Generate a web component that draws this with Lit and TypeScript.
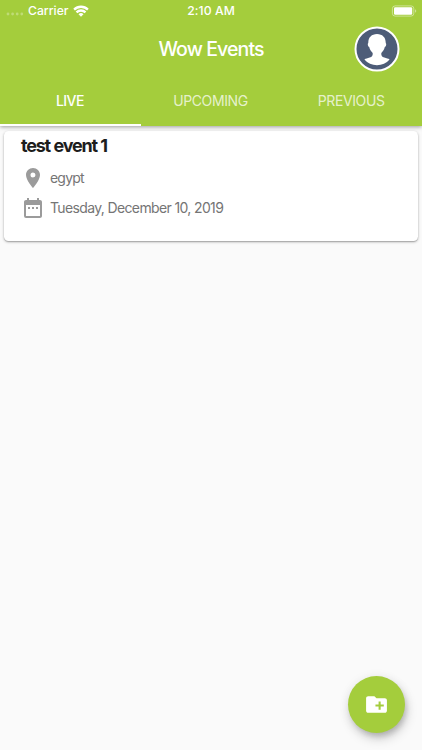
import { LitElement, html, css } from "lit";
import { customElement, property, state } from "lit/decorators.js";
import { classMap } from "lit/directives/class-map.js";

@customElement("status-bar")
class StatusBar extends LitElement {
  static styles = css`
    :host { display: grid; grid-template-columns: 1fr auto 1fr; align-items: center; height: 20px; padding: 0 5px 0 6px; color: #fff; font-size: 12.2px; line-height: 20px; font-weight: 500; }
    .left { display: flex; align-items: center; }
    .dots { width: 18px; height: 4px; margin: 7px 4px 0 0; }
    .carrier { letter-spacing: 0; font-weight: 450; padding-top: 1px; }
    .wifi { width: 16px; height: 12px; margin: 0 0 0 4px; }
    .time { letter-spacing: 0.08px; padding: 1px 1px 0 0; }
    .right { display: flex; justify-content: flex-end; }
    .battery { width: 26px; height: 12px; }
  `;
  render() {
    return html`
      <div class="left">
        <svg class="dots" viewBox="0 0 18 4" fill="#fff" fill-opacity=".3">
          <circle cx="2" cy="2" r="1.4"/><circle cx="6.6" cy="2" r="1.4"/><circle cx="11.2" cy="2" r="1.4"/><circle cx="15.8" cy="2" r="1.4"/>
        </svg>
        <span class="carrier">Carrier</span>
        <svg class="wifi" viewBox="0 0 16 12" fill="none" stroke="#fff" stroke-width="2.3">
          <path d="M1.1 4.6a9.8 9.8 0 0 1 13.8 0M3.5 7.4a6.3 6.3 0 0 1 9 0"/>
          <path d="M8 11.8 5.5 9.3a3.5 3.5 0 0 1 5 0z" fill="#fff" stroke="none"/>
        </svg>
      </div>
      <span class="time">2:10 AM</span>
      <div class="right">
        <svg class="battery" viewBox="0 0 26 12">
          <rect x="1.4" y=".9" width="21.4" height="10.2" rx="2.7" fill="none" stroke="#fff" stroke-opacity=".45"/>
          <rect x="3" y="2.3" width="18.2" height="7.4" rx="1.2" fill="#fff"/>
          <path d="M24.1 4.3c1.5.5 1.5 2.9 0 3.4z" fill="#fff" fill-opacity=".5"/>
        </svg>
      </div>`;
  }
}

@customElement("event-card")
class EventCard extends LitElement {
  @property() name = "";
  @property() place = "";
  @property() date = "";
  static styles = css`
    :host { display: block; box-sizing: border-box; height: 110px; padding: 3px 17px; background: #fff; border-radius: 4.5px; box-shadow: 0 1px 3px rgba(0,0,0,.28), 0 1px 1px rgba(0,0,0,.16); }
    .name { margin: 0; font-size: 18px; line-height: 24px; font-weight: 700; letter-spacing: -1.2px; word-spacing: 0.4px; color: #1d1d1d; }
    .row { display: flex; align-items: center; height: 30px; gap: 5px; font-size: 14px; line-height: 20px; color: #757575; letter-spacing: -0.64px; }
    .rows { padding-top: 5px; }
    .place { letter-spacing: -0.8px; }
    .icon { width: 24px; height: 24px; fill: #9b9b9b; }
  `;
  render() {
    return html`
      <h2 class="name">${this.name}</h2>
      <div class="rows">
        <div class="row">
          <svg class="icon" viewBox="0 0 24 24"><path d="M12 2C8.13 2 5 5.13 5 9c0 5.25 7 13 7 13s7-7.75 7-13c0-3.87-3.13-7-7-7zm0 9.5a2.5 2.5 0 1 1 0-5 2.5 2.5 0 0 1 0 5z"/></svg>
          <span class="place">${this.place}</span>
        </div>
        <div class="row">
          <svg class="icon" viewBox="0 0 24 24"><path d="M9 11H7v2h2v-2zm4 0h-2v2h2v-2zm4 0h-2v2h2v-2zm2-7h-1V2h-2v2H8V2H6v2H5c-1.11 0-1.99.9-1.99 2L3 20a2 2 0 0 0 2 2h14c1.1 0 2-.9 2-2V6c0-1.1-.9-2-2-2zm0 16H5V9h14v11z"/></svg>
          <span class="date">${this.date}</span>
        </div>
      </div>`;
  }
}

@customElement("app-root")
class AppRoot extends LitElement {
  @state() private active = 0;
  private tabs = ["LIVE", "UPCOMING", "PREVIOUS"];
  static styles = css`
    :host { display: flex; flex-direction: column; position: relative; height: 750px; overflow: hidden; background: #fafafa; font-family: Inter, "Liberation Sans", sans-serif; }
    .header { position: relative; z-index: 1; height: 126px; background: #a4cd3c; box-shadow: 0 1px 4px rgba(0,0,0,.38); }
    .bar { display: grid; grid-template-columns: 1fr auto 1fr; align-items: center; height: 58px; padding-right: 22px; padding-left: 22px; }
    .title { grid-column: 2; margin: 0; font-size: 19.5px; line-height: 24px; font-weight: 500; letter-spacing: -0.9px; color: #fff; }
    .avatar { justify-self: end; width: 46px; height: 46px; }
    .tabs { display: grid; grid-template-columns: repeat(3, 1fr); height: 48px; }
    .tab { box-sizing: border-box; padding: 0 1px 1px 0; border: 0; border-bottom: 2px solid transparent; background: none; font: 400 14px/20px Inter, sans-serif; letter-spacing: -0.4px; color: rgba(255,255,255,.74); }
    .tab.active { color: #fff; border-bottom-color: #fff; font-weight: 500; letter-spacing: -0.55px; }
    .list { padding: 5px 4px; }
    .fab { position: absolute; left: 348px; top: 676px; display: grid; place-items: center; width: 57px; height: 57px; padding: 0; border: 0; border-radius: 50%; background: #a4cd3c; box-shadow: 2px 4px 5px -1px rgba(0,0,0,.14), 2px 6px 11px rgba(0,0,0,.17), 0 1px 12px rgba(0,0,0,.06); }
    .add { width: 25px; height: 25px; fill: #fff; }
  `;
  render() {
    return html`
      <header class="header">
        <status-bar></status-bar>
        <div class="bar">
          <h1 class="title">Wow Events</h1>
          <svg class="avatar" viewBox="0 0 46 46">
            <circle cx="23" cy="23" r="21.5" fill="#4d5c78" stroke="#fff" stroke-width="2"/>
            <path fill="#fff" d="M23 8c-5.4 0-8.7 3.5-8.7 8.5 0 .8-.6.9-.5 2 .1 1.5.8 2.3 1.4 2.5.7 2.8 2 4.7 3.5 5.900.2 2.700-.6 3.900-3 4.700-2.200.7-4 1-5.300 2C13.600 37.300 18 39.200 23 39.200s9.400-1.900 12.600-5.600c-1.300-1-3.100-1.300-5.300-2-2.400-.8-3.200-2-3-4.700 1.500-1.200 2.800-3.100 3.500-5.900.6-.2 1.300-1 1.400-2.500.1-1.100-.5-1.200-.5-2C31.700 11.500 28.400 8 23 8z"/>
          </svg>
        </div>
        <nav class="tabs">
          ${this.tabs.map((t, i) => html`<button class=${classMap({ tab: true, active: i === this.active })} @click=${() => (this.active = i)}>${t}</button>`)}
        </nav>
      </header>
      <main class="list">
        <event-card name="test event 1" place="egypt" date="Tuesday, December 10, 2019"></event-card>
      </main>
      <button class="fab" aria-label="Add event">
        <svg class="add" viewBox="0 0 24 24"><path d="M20 6h-8l-2-2H4c-1.11 0-1.99.89-1.99 2L2 18c0 1.11.89 2 2 2h16c1.11 0 2-.89 2-2V8c0-1.11-.89-2-2-2zm-1 8h-3v3h-2v-3h-3v-2h3V9h2v3h3v2z"/></svg>
      </button>`;
  }
}
